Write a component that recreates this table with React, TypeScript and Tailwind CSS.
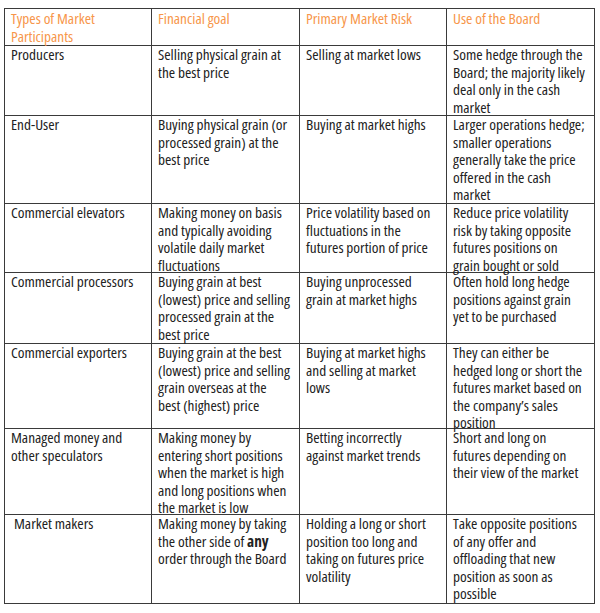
import React from "react";

type Cell = React.ReactNode;
type Row = { h: string; cells: Cell[] };

const lines = (...ls: React.ReactNode[]) =>
  ls.map((l, i) => (
    <React.Fragment key={i}>
      {l}
      {i < ls.length - 1 && <br />}
    </React.Fragment>
  ));

const rows: Row[] = [
  {
    h: "h-[70px]",
    cells: [
      lines("Producers"),
      lines("Selling physical grain at", "the best price"),
      lines("Selling at market lows"),
      lines("Some hedge through the", "Board; the majority likely", "deal only in the cash", "market"),
    ],
  },
  {
    h: "h-[88px]",
    cells: [
      lines("End-User"),
      lines("Buying physical grain (or", "processed grain) at the", "best price"),
      lines("Buying at market highs"),
      lines("Larger operations hedge;", "smaller operations", "generally take the price", "offered in the cash", "market"),
    ],
  },
  {
    h: "h-[69px]",
    cells: [
      lines("Commercial elevators"),
      lines("Making money on basis", "and typically avoiding", "volatile daily market", "fluctuations"),
      lines("Price volatility based on", "fluctuations in the", "futures portion of price"),
      lines("Reduce price volatility", "risk by taking opposite", "futures positions on", "grain bought or sold"),
    ],
  },
  {
    h: "h-[71px]",
    cells: [
      lines("Commercial processors"),
      lines("Buying grain at best", "(lowest) price and selling", "processed grain at the", "best price"),
      lines("Buying unprocessed", "grain at market highs"),
      lines("Often hold long hedge", "positions against grain", "yet to be purchased"),
    ],
  },
  {
    h: "h-[85px]",
    cells: [
      lines("Commercial exporters"),
      lines("Buying grain at the best", "(lowest) price and selling", "grain overseas at the", "best (highest) price"),
      lines("Buying at market highs", "and selling at market", "lows"),
      lines("They can either be", "hedged long or short the", "futures market based on", "the company\u2019s sales", "position"),
    ],
  },
  {
    h: "h-[86px]",
    cells: [
      lines("Managed money and", "other speculators"),
      lines("Making money by", "entering short positions", "when the market is high", "and long positions when", "the market is low"),
      lines("Betting incorrectly", "against market trends"),
      lines("Short and long on", "futures depending on", "their view of the market"),
    ],
  },
  {
    h: "h-[89px]",
    cells: [
      <span className="pl-[3px]">Market makers</span>,
      lines(
        "Making money by taking",
        <>
          the other side of <b className="font-bold">any</b>
        </>,
        "order through the Board"
      ),
      lines("Holding a long or short", "position too long and", "taking on futures price", "volatility"),
      lines("Take opposite positions", "of any offer and", "offloading that new", "position as soon as", "possible"),
    ],
  },
];

const widths = ["w-[147px]", "w-[148px]", "w-[147px]", "w-[148px]"];
const headers: React.ReactNode[] = [
  lines("Types of Market", "Participants"),
  "Financial goal",
  "Primary Market Risk",
  "Use of the Board",
];

export default function App() {
  return (
    <div className="w-[600px] h-[613px] bg-white pt-[8px] pl-[4px] font-['Open_Sans',sans-serif] [font-stretch:75%] text-[15.3px] leading-[17.5px] text-[#222222]">
      <div className="flex flex-col w-fit border-l border-t border-[#3a3a3a]">
        <div className="flex h-[37px]">
          {headers.map((t, i) => (
            <div
              key={i}
              className={`${widths[i]} border-r border-b border-[#3a3a3a] pl-[6px] pr-[2px] leading-[18px] text-[#f7964a]`}
            >
              {t}
            </div>
          ))}
        </div>
        {rows.map((r, ri) => (
          <div key={ri} className={`flex ${r.h}`}>
            {r.cells.map((c, ci) => (
              <div
                key={ci}
                className={`${widths[ci]} border-r border-b border-[#3a3a3a] pl-[6px] pr-[2px] whitespace-nowrap`}
              >
                {c}
              </div>
            ))}
          </div>
        ))}
      </div>
    </div>
  );
}
